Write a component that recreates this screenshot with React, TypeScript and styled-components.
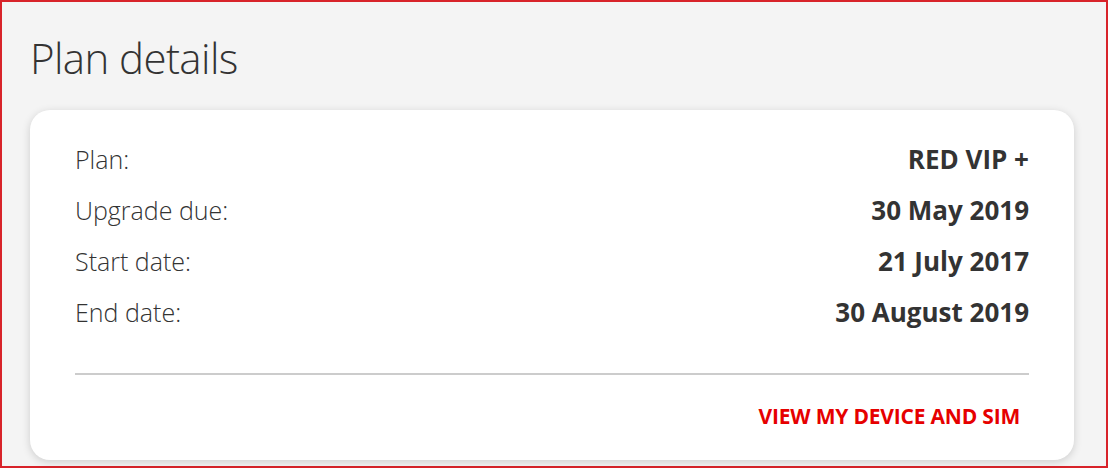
import styled, { createGlobalStyle } from 'styled-components';

const GlobalStyle = createGlobalStyle`
  html, body {
    margin: 0;
    padding: 0;
    background: #ffffff;
  }
  body {
    font-family: 'Open Sans', 'Liberation Sans', sans-serif;
    color: #333333;
  }
`;

const rows = [
  { label: 'Plan:', value: 'RED VIP +' },
  { label: 'Upgrade due:', value: '30 May 2019' },
  { label: 'Start date:', value: '21 July 2017' },
  { label: 'End date:', value: '30 August 2019' },
];

export default function App() {
  return (
    <>
      <GlobalStyle />
      <Frame>
        <Title>Plan details</Title>
        <Card>
          <DetailList>
            {rows.map((row) => (
              <DetailRow key={row.label}>
                <Label>{row.label}</Label>
                <Value>{row.value}</Value>
              </DetailRow>
            ))}
          </DetailList>
          <Divider />
          <Footer>
            <LinkButton href="#">VIEW MY DEVICE AND SIM</LinkButton>
          </Footer>
        </Card>
      </Frame>
    </>
  );
}

const Frame = styled.div`
  box-sizing: border-box;
  width: 1108px;
  height: 468px;
  border: 2px solid #d8232a;
  background: #f4f4f4;
  padding: 28px 34px 0 28px;
  display: flex;
  flex-direction: column;
`;

const Title = styled.h1`
  margin: 0 0 24px 0;
  font-size: 42px;
  line-height: 56px;
  font-weight: 300;
  color: #333333;
  letter-spacing: -0.6px;
`;

const Card = styled.div`
  box-sizing: border-box;
  width: 1044px;
  height: 350px;
  background: #ffffff;
  border-radius: 20px;
  box-shadow: 0 2px 8px rgba(0, 0, 0, 0.16);
  padding: 33px 45px 0 45px;
  display: flex;
  flex-direction: column;
`;

const DetailList = styled.div`
  display: flex;
  flex-direction: column;
  gap: 19px;
`;

const DetailRow = styled.div`
  display: flex;
  justify-content: space-between;
  align-items: baseline;
  height: 32px;
`;

const Label = styled.span`
  font-size: 25px;
  line-height: 32px;
  font-weight: 300;
  color: #333333;
`;

const Value = styled.span`
  font-size: 26px;
  line-height: 32px;
  font-weight: 700;
  color: #333333;
`;

const Divider = styled.hr`
  margin: 45px 0 0 0;
  border: none;
  height: 2px;
  background: #cccccc;
`;

const Footer = styled.div`
  display: flex;
  justify-content: flex-end;
  padding: 27px 9px 0 0;
`;

const LinkButton = styled.a`
  font-size: 21px;
  line-height: 28px;
  font-weight: 700;
  color: #e60000;
  text-decoration: none;
  letter-spacing: -0.2px;
`;
